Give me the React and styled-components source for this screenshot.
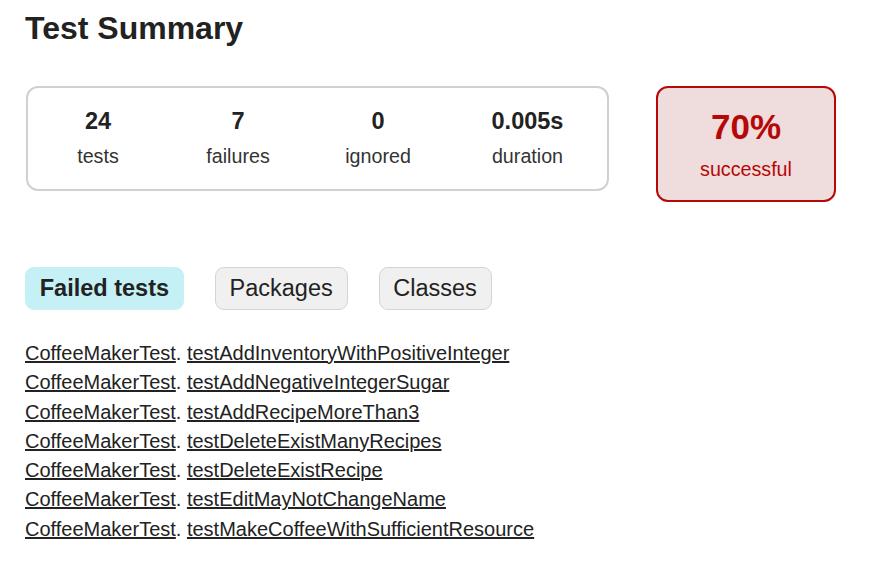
import React from 'react';
import styled, { createGlobalStyle } from 'styled-components';

const GlobalStyle = createGlobalStyle`
  html, body {
    margin: 0;
    padding: 0;
    background: #ffffff;
  }
  body {
    font-family: "Liberation Sans", Arial, sans-serif;
    color: #222;
  }
`;

const Page = styled.div`
  padding: 0 25px;
`;

const Title = styled.h1`
  margin: 10px 0 0;
  font-size: 32px;
  font-weight: bold;
  line-height: 36px;
  color: #222;
`;

const SummaryRow = styled.div`
  display: flex;
  align-items: flex-start;
  margin-top: 40px;
  margin-left: 1px;
`;

const SummaryGroup = styled.div`
  display: flex;
  width: 579px;
  padding: 19px 0 21px;
  border: 2px solid #d0d0d0;
  border-radius: 12px;
`;

const InfoBox = styled.div`
  width: ${p => p.$w || 140}px;
  text-align: center;
`;

const Counter = styled.div`
  font-size: 23.5px;
  font-weight: bold;
  line-height: 28px;
  margin-bottom: 10px;
  color: #222;
`;

const Label = styled.div`
  font-size: 19.7px;
  line-height: 23px;
  color: #333;
`;

const SuccessRate = styled.div`
  width: 176px;
  margin-left: 47px;
  padding: 19px 0 19px;
  border: 2px solid #b60808;
  border-radius: 12px;
  background: #efdcdc;
  text-align: center;
  color: #b60808;
`;

const Percent = styled.div`
  font-size: 35px;
  font-weight: bold;
  line-height: 40px;
  margin-bottom: 11px;
`;

const SuccessLabel = styled(Label)`
  color: #b60808;
`;

const Tabs = styled.ul`
  display: flex;
  gap: 31px;
  margin: 65px 0 0;
  padding: 0;
  list-style: none;
`;

const Tab = styled.li`
  padding: 7px 13.75px 7px;
  font-size: 23.5px;
  line-height: 27px;
  border-radius: 9px;
  border: 1px solid ${p => (p.$selected ? '#c5f0f5' : '#d4d4d4')};
  background: ${p => (p.$selected ? '#c5f0f5' : '#f0f0f0')};
  font-weight: ${p => (p.$selected ? 'bold' : 'normal')};
  color: #222;
`;

const TestList = styled.ul`
  margin: 29px 0 0;
  padding: 0;
  list-style: none;
`;

const TestItem = styled.li`
  font-size: 20px;
  line-height: 29.3px;
  color: #222;
`;

const Link = styled.a`
  color: #222;
  text-decoration: underline;
`;

const failed = [
  'testAddInventoryWithPositiveInteger',
  'testAddNegativeIntegerSugar',
  'testAddRecipeMoreThan3',
  'testDeleteExistManyRecipes',
  'testDeleteExistRecipe',
  'testEditMayNotChangeName',
  'testMakeCoffeeWithSufficientResource',
];

const stats = [
  { value: '24', label: 'tests' },
  { value: '7', label: 'failures' },
  { value: '0', label: 'ignored' },
  { value: '0.005s', label: 'duration', w: 159 },
];

export default function App() {
  return (
    <Page>
      <GlobalStyle />
      <Title>Test Summary</Title>

      <SummaryRow>
        <SummaryGroup>
          {stats.map(s => (
            <InfoBox key={s.label} $w={s.w}>
              <Counter>{s.value}</Counter>
              <Label>{s.label}</Label>
            </InfoBox>
          ))}
        </SummaryGroup>
        <SuccessRate>
          <Percent>70%</Percent>
          <SuccessLabel>successful</SuccessLabel>
        </SuccessRate>
      </SummaryRow>

      <Tabs>
        <Tab $selected>Failed tests</Tab>
        <Tab>Packages</Tab>
        <Tab>Classes</Tab>
      </Tabs>

      <TestList>
        {failed.map(name => (
          <TestItem key={name}>
            <Link href="#">CoffeeMakerTest</Link>. <Link href="#">{name}</Link>
          </TestItem>
        ))}
      </TestList>
    </Page>
  );
}
